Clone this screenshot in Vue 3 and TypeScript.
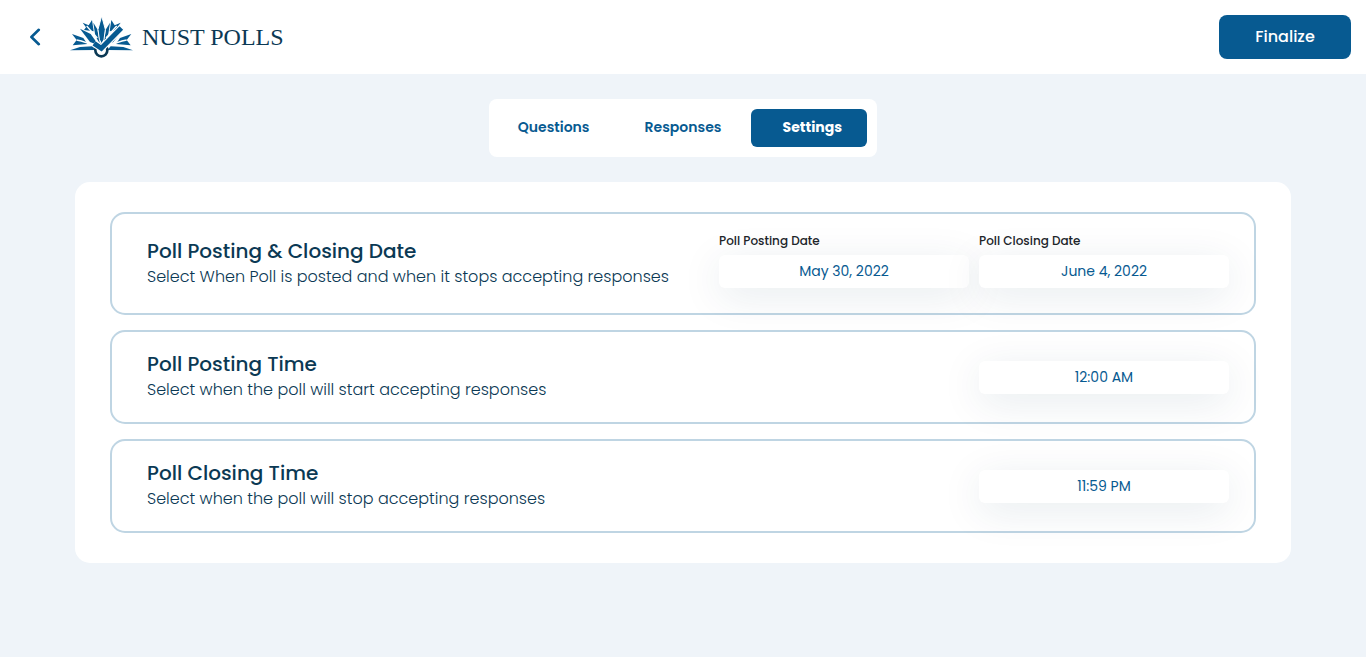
<script setup lang="ts">
import { ref } from 'vue'

interface Field {
  id: string
  label?: string
  value: string
}

interface Setting {
  title: string
  hint: string
  fields: Field[]
}

const tabs = ['Questions', 'Responses', 'Settings']
const activeTab = ref(2)

const settings = ref<Setting[]>([
  {
    title: 'Poll Posting & Closing Date',
    hint: 'Select When Poll is posted and when it stops accepting responses',
    fields: [
      { id: 'posting-date', label: 'Poll Posting Date', value: 'May 30, 2022' },
      { id: 'closing-date', label: 'Poll Closing Date', value: 'June 4, 2022' },
    ],
  },
  {
    title: 'Poll Posting Time',
    hint: 'Select when the poll will start accepting responses',
    fields: [{ id: 'posting-time', value: '12:00 AM' }],
  },
  {
    title: 'Poll Closing Time',
    hint: 'Select when the poll will stop accepting responses',
    fields: [{ id: 'closing-time', value: '11:59 PM' }],
  },
])
</script>

<template>
  <div class="page">
    <header class="topbar">
      <button class="back" type="button" aria-label="Back">
        <svg width="12" height="18" viewBox="0 0 12 18" fill="none">
          <path d="M9.8 1.8 2.4 9l7.4 7.2" stroke="#075a91" stroke-width="2.6" stroke-linecap="round" stroke-linejoin="round" />
        </svg>
      </button>
      <a class="brand" href="#">
        <svg class="emblem" width="63" height="42" viewBox="0 0 189 126" aria-hidden="true">
          <g fill="#075a91">
            <g id="wing">
              <path d="M30 38 62 54 86 88 60 78Z" />
              <path d="M70 20 82 40 90 84 76 60Z" />
              <path d="M0 103 30 93 68 91 78 102Z" />
              <path d="M38 20 56 28 66 12 71 46 42 42 48 34Z" />
              <path d="M6 54 40 66 52 84 8 88 20 72Z" />
              <path d="M50 30 82 66" fill="none" stroke="#fff" stroke-width="4" />
              <path d="M20 72 34 75 66 86" fill="none" stroke="#fff" stroke-width="4" />
            </g>
            <use href="#wing" transform="translate(190 0) scale(-1 1)" />
            <path d="M95 0 106 40 102 70 95 84 88 70 84 40Z" stroke="#fff" stroke-width="3" />
          </g>
          <circle cx="94" cy="103" r="18" fill="#fff" stroke="#0b3954" stroke-width="8" />
          <path d="M72 82 94 97 154 36" fill="none" stroke="#fff" stroke-width="22" />
          <path d="M72 82 94 97 154 36" fill="none" stroke="#075a91" stroke-width="15" />
        </svg>
        <span class="brand-name">NUST POLLS</span>
      </a>
      <button class="finalize" type="button">Finalize</button>
    </header>

    <main>
      <nav class="tabs" aria-label="Poll sections">
        <span class="pill" :style="{ left: `calc(${activeTab} * (100% - 136px) / 2 + 10px)` }"></span>
        <button
          v-for="(tab, i) in tabs"
          :key="tab"
          type="button"
          :class="['tab', { active: i === activeTab }]"
          @click="activeTab = i"
        >{{ tab }}</button>
      </nav>

      <section class="panel">
        <article v-for="s in settings" :key="s.title" :class="['card', { dated: s.fields.length > 1 }]">
          <div class="about">
            <h2><label :for="s.fields[0].id">{{ s.title }}</label></h2>
            <p>{{ s.hint }}</p>
          </div>
          <div class="fields">
            <div v-for="f in s.fields" :key="f.id" class="field">
              <label v-if="f.label" class="caption" :for="f.id">{{ f.label }}</label>
              <input :id="f.id" v-model="f.value" type="text" />
            </div>
          </div>
        </article>
      </section>
    </main>
  </div>
</template>

<style>
body {
  margin: 0;
  background: #eff4f9;
}
</style>

<style scoped>
.page {
  font-family: Poppins, Inter, "Open Sans", sans-serif;
  color: #0b3954;
}
button,
input {
  font-family: inherit;
  border: 0;
  margin: 0;
}
button {
  padding: 0 0 2px;
  cursor: pointer;
}
.topbar {
  display: flex;
  align-items: center;
  height: 74px;
  padding: 0 15px;
  background: #fff;
}
.back {
  display: flex;
  justify-content: center;
  width: 40px;
  padding: 0;
  background: none;
}
.brand {
  display: flex;
  align-items: center;
  gap: 9px;
  margin-left: 15px;
  text-decoration: none;
}
.brand-name {
  font: 24px "Liberation Serif", serif;
  color: #0b3954;
}
.finalize {
  margin-left: auto;
  width: 132px;
  height: 44px;
  border-radius: 8px;
  background: #075a91;
  color: #fff;
  font-size: 16px;
  font-weight: 500;
}
.tabs {
  position: relative;
  display: grid;
  grid-template-columns: repeat(3, 1fr);
  width: 388px;
  height: 58px;
  margin: 25px auto;
  border-radius: 8px;
  background: #fff;
}
.pill {
  position: absolute;
  top: 10px;
  width: 116px;
  height: 38px;
  border-radius: 6px;
  background: #075a91;
}
.tab {
  position: relative;
  background: none;
  color: #075a91;
  font-size: 14px;
  font-weight: 600;
}
.tab.active {
  color: #fff;
  font-weight: 700;
}
.panel {
  display: flex;
  flex-direction: column;
  gap: 15px;
  margin: 0 75px;
  padding: 30px 35px;
  border-radius: 15px;
  background: #fff;
}
.card {
  display: flex;
  justify-content: space-between;
  align-items: center;
  padding: 19px 25px 19px 35px;
  border: 2px solid #bfd5e3;
  border-radius: 15px;
}
.dated {
  align-items: flex-start;
  padding-top: 18px;
  padding-bottom: 23px;
}
.dated .about {
  padding-top: 6px;
}
h2 {
  margin: 0;
  font-size: 20px;
  line-height: 26px;
  font-weight: 500;
}
p {
  margin: 0;
  font-size: 16px;
  line-height: 26px;
  font-weight: 300;
}
.fields {
  display: flex;
  gap: 10px;
}
.field {
  display: flex;
  flex-direction: column;
  gap: 5px;
  width: 250px;
}
.caption {
  color: #212529;
  font-size: 12px;
  line-height: 18px;
  font-weight: 500;
}
input {
  box-sizing: border-box;
  width: 100%;
  height: 33px;
  padding: 0 10px;
  border-radius: 6px;
  background: #fff;
  box-shadow: 0 8px 40px rgba(11, 57, 84, 0.1);
  color: #075a91;
  font-size: 14px;
  text-align: center;
}
</style>
